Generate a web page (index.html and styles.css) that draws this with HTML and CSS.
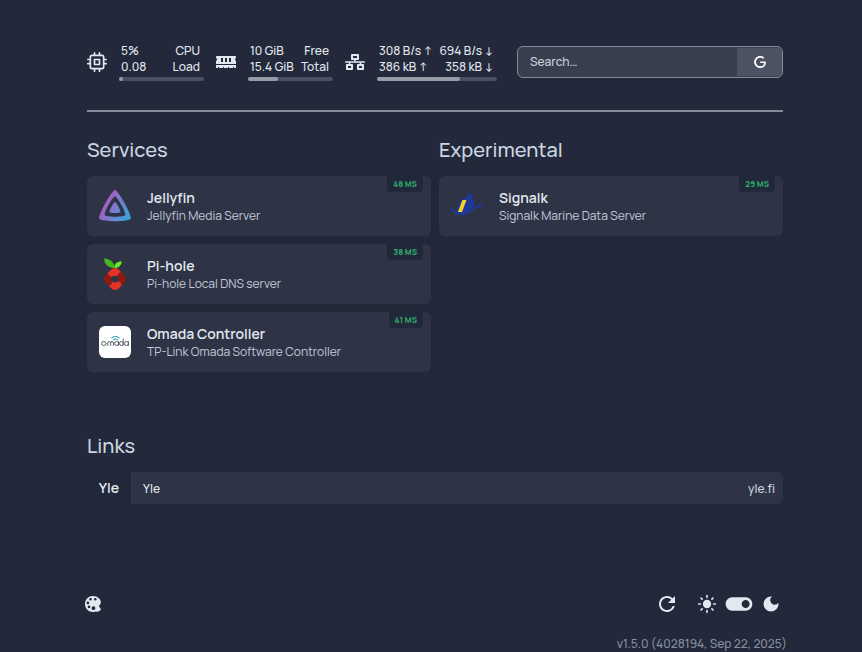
FILE: index.html
```html
<!DOCTYPE html>
<html lang="en">
<head>
<meta charset="utf-8">
<title>Homepage</title>
<link rel="stylesheet" href="styles.css">
</head>
<body>
<div class="page">
  <header class="topbar">
    <div class="widget">
      <svg class="widget-icon" viewBox="0 0 24 24" fill="none" stroke="currentColor" stroke-width="2" stroke-linecap="round" stroke-linejoin="round"><rect x="4" y="4" width="16" height="16" rx="2"/><rect x="9" y="9" width="6" height="6"/><path d="M9 1v3M15 1v3M9 20v3M15 20v3M20 9h3M20 14h3M1 9h3M1 14h3"/></svg>
      <div class="stats">
        <div class="stat-row"><span>5%</span><span>CPU</span></div>
        <div class="stat-row"><span>0.08</span><span>Load</span></div>
        <div class="meter"><div class="meter-fill" style="width:5%"></div></div>
      </div>
    </div>
    <div class="widget">
      <svg class="widget-icon" viewBox="0 0 640 512" fill="currentColor"><path d="M640 130.94V96c0-17.67-14.33-32-32-32H32C14.33 64 0 78.33 0 96v34.94c18.6 6.61 32 24.19 32 45.06s-13.4 38.45-32 45.06V320h640v-98.94c-18.6-6.61-32-24.19-32-45.06s13.4-38.45 32-45.06zM224 256h-64V128h64v128zm128 0h-64V128h64v128zm128 0h-64V128h64v128zM0 448h64v-26.67c0-8.84 7.16-16 16-16s16 7.16 16 16V448h128v-26.67c0-8.84 7.16-16 16-16s16 7.16 16 16V448h128v-26.67c0-8.84 7.16-16 16-16s16 7.16 16 16V448h128v-26.67c0-8.84 7.16-16 16-16s16 7.16 16 16V448h64v-96H0v96z"/></svg>
      <div class="stats">
        <div class="stat-row"><span>10 GiB</span><span>Free</span></div>
        <div class="stat-row"><span>15.4 GiB</span><span>Total</span></div>
        <div class="meter"><div class="meter-fill" style="width:35%"></div></div>
      </div>
    </div>
    <div class="widget">
      <svg class="widget-icon" viewBox="0 0 640 512" fill="currentColor"><path d="M640 264v-16c0-8.84-7.16-16-16-16H344v-40h72c17.67 0 32-14.33 32-32V32c0-17.67-14.33-32-32-32H224c-17.67 0-32 14.33-32 32v128c0 17.67 14.33 32 32 32h72v40H16c-8.84 0-16 7.16-16 16v16c0 8.84 7.16 16 16 16h104v40H64c-17.67 0-32 14.33-32 32v128c0 17.67 14.33 32 32 32h160c17.67 0 32-14.33 32-32V352c0-17.67-14.33-32-32-32h-56v-40h304v40h-56c-17.67 0-32 14.33-32 32v128c0 17.67 14.33 32 32 32h160c17.67 0 32-14.33 32-32V352c0-17.67-14.33-32-32-32h-56v-40h104c8.84 0 16-7.16 16-16zM256 128V64h128v64H256zm-64 320H96v-64h96v64zm352 0h-96v-64h96v64z"/></svg>
      <div class="stats stats-wide">
        <div class="stat-row"><span>308 B/s ↑</span><span>694 B/s ↓</span></div>
        <div class="stat-row"><span>386 kB ↑</span><span>358 kB ↓</span></div>
        <div class="meter"><div class="meter-fill" style="width:69%"></div></div>
      </div>
    </div>
    <form class="search">
      <input class="search-input" type="text" placeholder="Search…" aria-label="Search">
      <button class="search-button" type="button" aria-label="Google">
        <svg class="google" viewBox="0 0 24 24" fill="currentColor"><path d="M12.48 10.92v3.28h7.84c-.24 1.84-.853 3.187-1.787 4.133-1.147 1.147-2.933 2.4-6.053 2.4-4.827 0-8.6-3.893-8.6-8.72s3.773-8.72 8.6-8.72c2.6 0 4.507 1.027 5.907 2.347l2.307-2.307C18.747 1.44 16.133 0 12.48 0 5.867 0 .307 5.387.307 12s5.56 12 12.173 12c3.573 0 6.267-1.173 8.373-3.36 2.16-2.16 2.84-5.213 2.84-7.667 0-.76-.053-1.467-.173-2.053H12.48z"/></svg>
      </button>
    </form>
  </header>

  <main>
    <div class="groups">
      <section class="group">
        <h2>Services</h2>
        <ul>
          <li><a class="card" href="#">
            <svg class="logo" viewBox="0 0 32 32"><defs><linearGradient id="jf" gradientUnits="userSpaceOnUse" x1="5" y1="13" x2="28" y2="27"><stop offset="0" stop-color="#a95cc3"/><stop offset="1" stop-color="#3fa1d8"/></linearGradient></defs><path fill="url(#jf)" fill-rule="evenodd" d="M16 0C19.300 0 33.300 25.500 31.700 28.800C30.100 32.100 1.900 32.100 .3 28.800C-1.300 25.500 12.700 0 16 0ZM16 6.200C13.800 6.200 4.600 23 5.700 25.100C6.800 27.300 25.200 27.300 26.300 25.100C27.400 23 18.200 6.200 16 6.200ZM16 12C17.200 12 22 20.700 21.400 22C20.800 23.300 11.200 23.300 10.600 22C10 20.700 14.800 12 16 12Z"/></svg>
            <div class="card-text"><span class="name">Jellyfin</span><span class="desc">Jellyfin Media Server</span></div>
            <span class="ping">48 MS</span>
          </a></li>
          <li><a class="card" href="#">
            <svg class="logo" viewBox="0 0 32 32"><path fill="#45b81c" d="M15 10C10 9.500 5 7 5.200 .300C11 1.200 15.500 4 15.200 10Z"/><path fill="#66ef22" d="M15.500 10C15 6 17.500 3.500 22.700 3.200C22.500 7 20 10 15.500 10Z"/><path fill="#8c1a13" d="M9.500 14L5.700 18.500Q4 21 5.700 23.500L10 27.500Q13.500 27 13 23.500Q11.500 21 13 18.500Q9 18 9.500 14ZM22 14L26.300 18.500Q28 21 26.300 23.500L22 28Q22.500 24 18.500 23.500Q20.500 21 18.500 18.500Q18.500 15 22 14Z"/><path fill="#e43326" d="M9 14.500L13 11Q16 9.200 19 11L22.500 14.200Q18.500 15 18.500 18.500Q16 16.800 13 18.500Q9 19 9 14.500ZM22.500 27.500L19 31Q16 33 13 31L9.500 27.500Q13.500 27 13 23.500Q16 25.500 18.500 23.500Q22.500 23.500 22.500 27.500Z"/></svg>
            <div class="card-text"><span class="name">Pi-hole</span><span class="desc">Pi-hole Local DNS server</span></div>
            <span class="ping">38 MS</span>
          </a></li>
          <li><a class="card" href="#">
            <svg class="logo" viewBox="0 0 32 32"><rect width="32" height="32" rx="6" fill="#fff"/><g fill="none" stroke="#5b6270" stroke-width="1"><ellipse cx="4.800" cy="17.500" rx="2.300" ry="2"/><path d="M8.800 19.800V17Q8.800 15.500 10.300 15.500Q11.700 15.500 11.700 17V19.800M11.700 17Q11.700 15.500 13 15.500Q14.400 15.500 14.400 17V19.800M19.500 15.200V19.800M24.200 12.500V19.800M29.400 15.200V19.800"/><ellipse cx="17.600" cy="17.500" rx="2" ry="2"/><ellipse cx="22.400" cy="17.500" rx="1.900" ry="2"/><ellipse cx="27.500" cy="17.500" rx="2" ry="2"/></g><path d="M12.500 12.300Q16.500 8.500 20.500 12.300M14.300 14Q16.500 12.200 18.700 14" fill="none" stroke="#4aabc0" stroke-width="1.200"/></svg>
            <div class="card-text"><span class="name">Omada Controller</span><span class="desc">TP-Link Omada Software Controller</span></div>
            <span class="ping">41 MS</span>
          </a></li>
        </ul>
      </section>
      <section class="group">
        <h2>Experimental</h2>
        <ul>
          <li><a class="card" href="#">
            <svg class="logo" viewBox="0 0 32 32"><path fill="#1f389d" d="M5.500 24C6 18 7.500 13 10 10Q12 7.500 15.500 8L17 3.200L21.800 4.400L20.500 8.500Q21 9.500 23 12Q24 15 21.500 17.500L14 23.500Q10 26 5.500 24Z"/><path fill="none" stroke="#1f389d" stroke-width="2" stroke-linecap="round" d="M.8 19Q5.500 26 15 23.500C20 21.500 23 16.500 31 15"/><path fill="#f8d324" d="M11.500 10H15.500L11 22H7Z"/></svg>
            <div class="card-text"><span class="name">Signalk</span><span class="desc">Signalk Marine Data Server</span></div>
            <span class="ping">29 MS</span>
          </a></li>
        </ul>
      </section>
    </div>
    <section class="links">
      <h2>Links</h2>
      <a class="bookmark" href="#"><span class="abbr">Yle</span><span class="bookmark-name">Yle</span><span class="host">yle.fi</span></a>
    </section>
  </main>

  <footer>
    <div class="controls">
      <button class="icon-button" type="button" aria-label="Color palette"><svg class="icon" viewBox="0 0 20 20"><path fill="currentColor" fill-rule="evenodd" d="M10 2C5.500 2 2 5.500 2 10S5.500 18 10 18Q11.500 18 12.500 17.400C14 18 16.500 17.500 17.500 16.300C18.500 14.500 16.500 13.500 16 12.600C15.500 11.500 17.600 10.500 17.900 9.300C18.200 5 14.500 2 10 2ZM7.500 4A1.300 1.300 0 1 1 7.500 6.600A1.300 1.300 0 0 1 7.500 4ZM12.300 4A1.300 1.300 0 1 1 12.300 6.600A1.300 1.300 0 0 1 12.300 4ZM4.900 7.600A1.300 1.300 0 1 1 4.900 10.200A1.300 1.300 0 0 1 4.900 7.600ZM6 11.600A1.300 1.300 0 1 1 6 14.200A1.300 1.300 0 0 1 6 11.600ZM10.500 12.300A1.900 1.900 0 1 1 10.500 16.100A1.900 1.900 0 0 1 10.500 12.300Z"/></svg></button>
      <button class="icon-button reload" type="button" aria-label="Refresh"><svg class="icon-large" viewBox="0 0 24 24" fill="currentColor"><path d="M17.65 6.35A7.958 7.958 0 0012 4c-4.42 0-7.99 3.58-7.99 8s3.57 8 7.99 8c3.73 0 6.84-2.55 7.73-6h-2.08A5.99 5.99 0 0112 18c-3.31 0-6-2.69-6-6s2.69-6 6-6c1.66 0 3.14.69 4.22 1.78L13 11h7V4l-2.35 2.35z"/></svg></button>
      <button class="theme" type="button" aria-label="Toggle dark theme">
        <svg class="icon" viewBox="0 0 24 24"><circle cx="12" cy="12" r="5" fill="currentColor"/><path stroke="currentColor" stroke-width="2" stroke-linecap="round" d="M12 2v2M12 20v2M2 12h2M20 12h2M4.900 4.900l1.200 1.200M17.900 17.900l1.200 1.200M4.900 19.100l1.200-1.200M17.900 6.100l1.200-1.200"/></svg>
        <svg class="switch" viewBox="0 0 24 24" fill="currentColor"><path d="M17 7H7c-2.760 0-5 2.240-5 5s2.240 5 5 5h10c2.760 0 5-2.240 5-5s-2.240-5-5-5zm0 8c-1.660 0-3-1.340-3-3s1.340-3 3-3 3 1.340 3 3-1.340 3-3 3z"/></svg>
        <svg class="icon" viewBox="0 0 24 24" fill="currentColor"><path d="M12 3a9 9 0 109 9c0-.46-.04-.92-.1-1.36a5.389 5.389 0 01-4.400 2.260 5.403 5.403 0 01-3.140-9.800c-.44-.06-.9-.1-1.360-.1z"/></svg>
      </button>
    </div>
    <a class="version" href="#">v1.5.0 (4028194, Sep 22, 2025)</a>
  </footer>
</div>
</body>
</html>
```
FILE: styles.css
```css
* { box-sizing: border-box; }
body {
  margin: 0;
  background: #23293a;
  color: #e2e8f0;
  font-family: Manrope, Inter, "Liberation Sans", sans-serif;
}
a { color: inherit; text-decoration: none; }
button { border: 0; padding: 0; background: none; color: inherit; cursor: pointer; }
svg { display: block; flex: none; }
ul { list-style: none; margin: 0; padding: 0; display: flex; flex-direction: column; gap: 8px; }
h2 { margin: 0 0 12px; font-size: 20px; line-height: 28px; font-weight: 500; color: #cbd5e1; }

.page { padding: 43px 79px 0 87px; }

.topbar {
  display: flex;
  align-items: center;
  gap: 12px;
  padding-bottom: 29px;
  border-bottom: 2px solid #848b99;
}
.widget { display: flex; align-items: center; gap: 12px; }
.widget-icon { width: 20px; height: 20px; }
.stats { min-width: 85px; font-size: 12px; line-height: 16px; font-weight: 500; }
.stats-wide { min-width: 120px; }
.stat-row { display: flex; justify-content: space-between; gap: 6px; padding: 0 4px 0 2px; white-space: nowrap; }
.meter { height: 4px; margin-top: 2px; border-radius: 2px; background: #4a5061; }
.meter-fill { height: 4px; border-radius: 2px; background: #969ca8; }

.search {
  flex: 1;
  min-width: 0;
  display: flex;
  height: 32px;
  margin-left: 8px;
  border: 1px solid #858b9a;
  border-radius: 6px;
  background: #3a3f50;
  overflow: hidden;
}
.search-input {
  flex: 1;
  min-width: 0;
  border: 0;
  padding: 0 12px;
  background: none;
  color: #e2e8f0;
  font: 500 12px/20px Manrope, Inter, "Liberation Sans", sans-serif;
  outline: 0;
}
.search-input::placeholder { color: #cbd1da; opacity: 1; }
.search-button { width: 45px; margin: 1px 0; display: grid; place-items: center; background: #4d5362; color: #fff; }
.google { width: 12px; height: 12px; }

.groups { display: grid; grid-template-columns: 1fr 1fr; gap: 8px; padding-top: 24px; }
.card {
  position: relative;
  display: flex;
  align-items: center;
  gap: 16px;
  height: 60px;
  padding: 0 12px;
  border-radius: 6px;
  background: #2e3445;
  box-shadow: 0 3px 6px #1e293b99;
}
.logo { width: 32px; height: 32px; }
.card-text { display: flex; flex-direction: column; }
.name { font-size: 14px; line-height: 20px; font-weight: 600; }
.desc { font-size: 12px; line-height: 16px; font-weight: 400; color: #c1cbda; }
.ping {
  position: absolute;
  top: 0;
  right: 8px;
  padding: 0 6px;
  border-radius: 0 0 4px 4px;
  background: #21283a;
  color: #2fa36b;
  font-size: 8px;
  line-height: 16px;
  font-weight: 800;
}

.links { padding-top: 60px; }
.bookmark {
  display: flex;
  align-items: center;
  height: 32px;
  border-radius: 6px;
  overflow: hidden;
  background: #2e3445;
  box-shadow: 0 3px 6px #1e293b99;
  font-size: 12px;
}
.abbr { width: 44px; text-align: center; line-height: 32px; background: #21283a; font-size: 14px; font-weight: 600; }
.bookmark-name { flex: 1; padding-left: 12px; font-weight: 500; }
.host { padding-right: 8px; font-weight: 500; color: #cbd5e1; }

footer { padding-top: 84px; }
.controls { display: flex; align-items: center; height: 32px; margin: 0 2px 0 -4px; }
.icon { width: 20px; height: 20px; }
.icon-large { width: 24px; height: 24px; }
.reload { margin-left: auto; }
.theme { display: flex; align-items: center; gap: 6px; margin-left: 18px; }
.switch { width: 32px; height: 32px; }
.version { display: block; margin: 16px -4px 0 0; text-align: right; font-size: 12px; line-height: 16px; font-weight: 500; color: #8791a3; }
```
